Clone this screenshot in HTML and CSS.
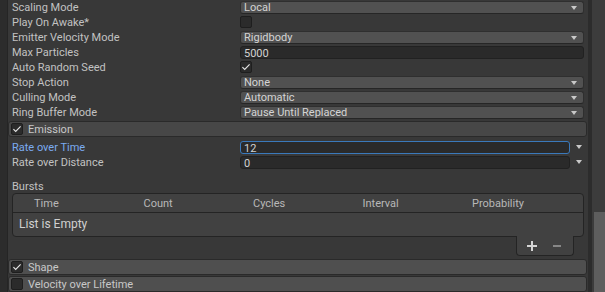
FILE: index.html
```html
<!DOCTYPE html>
<html>
<head>
<meta charset="utf-8">
<link rel="stylesheet" href="styles.css">
</head>
<body>
<div class="inspector">
  <div class="edge"></div>
  <div class="content">
    <div class="props">
      <div class="row"><span class="label">Scaling Mode</span><div class="dropdown"><span>Local</span><i class="tri"></i></div></div>
      <div class="row"><span class="label">Play On Awake*</span><span class="checkbox"></span></div>
      <div class="row"><span class="label">Emitter Velocity Mode</span><div class="dropdown"><span>Rigidbody</span><i class="tri"></i></div></div>
      <div class="row"><span class="label">Max Particles</span><div class="textfield">5000</div></div>
      <div class="row"><span class="label">Auto Random Seed</span><span class="checkbox"><svg viewBox="0 0 12 12" width="12" height="12"><path d="M2.4 6.2 L4.7 8.5 L9.6 3.3" fill="none" stroke="#e6e6e6" stroke-width="1.1"/></svg></span></div>
      <div class="row"><span class="label">Stop Action</span><div class="dropdown"><span>None</span><i class="tri"></i></div></div>
      <div class="row"><span class="label">Culling Mode</span><div class="dropdown"><span>Automatic</span><i class="tri"></i></div></div>
      <div class="row"><span class="label">Ring Buffer Mode</span><div class="dropdown"><span>Pause Until Replaced</span><i class="tri"></i></div></div>
    </div>

    <div class="module-header emission"><span class="checkbox"><svg viewBox="0 0 12 12" width="12" height="12"><path d="M2.4 6.2 L4.7 8.5 L9.6 3.3" fill="none" stroke="#e6e6e6" stroke-width="1.1"/></svg></span><span class="module-title">Emission</span></div>
    <div class="module-body">
      <div class="row"><span class="label focus">Rate over Time</span><div class="curve-field"><div class="textfield focused">12</div><i class="tri"></i></div></div>
      <div class="row"><span class="label">Rate over Distance</span><div class="curve-field"><div class="textfield">0</div><i class="tri"></i></div></div>
      <div class="section-label">Bursts</div>
      <div class="list">
        <div class="list-head"><span>Time</span><span>Count</span><span>Cycles</span><span>Interval</span><span>Probability</span></div>
        <div class="list-body">List is Empty</div>
      </div>
      <div class="list-footer-row"><div class="list-footer">
        <svg class="plus" viewBox="0 0 10 10" width="10" height="10"><path d="M0 5 H10 M5 0 V10" stroke="#d4d4d4" stroke-width="2"/></svg>
        <svg class="minus" viewBox="0 0 8 10" width="8" height="10"><path d="M0 5 H8" stroke="#878787" stroke-width="2"/></svg>
      </div></div>
    </div>
    <div class="modules">
      <div class="module-header"><span class="checkbox"><svg viewBox="0 0 12 12" width="12" height="12"><path d="M2.4 6.2 L4.7 8.5 L9.6 3.3" fill="none" stroke="#e6e6e6" stroke-width="1.1"/></svg></span><span class="module-title">Shape</span></div>
      <div class="module-header"><span class="checkbox"></span><span class="module-title">Velocity over Lifetime</span></div>
    </div>
  </div>
  <div class="scrollbar"><div class="thumb"></div></div>
</div>
</body>
</html>
```

FILE: styles.css
```css
* { box-sizing: border-box; }
html, body {
  margin: 0;
  padding: 0;
  background: #383838;
  width: 605px;
  height: 292px;
  overflow: hidden;
}
body {
  font-family: Roboto, "Noto Sans", sans-serif;
  font-size: 11px;
  color: #c2c2c2;
}
.inspector {
  display: flex;
  height: 292px;
}
.edge {
  width: 8px;
  flex: none;
  background: #2c2c2c;
  border-right: 1px solid #252525;
}
.content {
  width: 580px;
  flex: none;
  display: flex;
  flex-direction: column;
}
.props {
  display: flex;
  flex-direction: column;
  gap: 2px;
}
.row {
  display: grid;
  grid-template-columns: 228px 1fr;
  align-items: center;
  height: 13px;
  padding: 0 4px;
}
.label {
  white-space: nowrap;
  line-height: 13px;
  padding-top: 1px;
}
.label.focus { color: #7babf0; }
.dropdown {
  height: 13px;
  background: #515151;
  border: 1px solid #2f2f2f;
  border-bottom-color: #262626;
  border-radius: 3px;
  display: flex;
  align-items: center;
  justify-content: space-between;
  padding: 1px 6px 0 3px;
  color: #d4d4d4;
  line-height: 11px;
}
.tri {
  display: block;
  width: 0;
  height: 0;
  border-left: 3.5px solid transparent;
  border-right: 3.5px solid transparent;
  border-top: 4px solid #c8c8c8;
}
.textfield {
  height: 13px;
  background: #2a2a2a;
  border: 1px solid #212121;
  border-radius: 3px;
  padding: 1px 3px 0;
  line-height: 11px;
  color: #d2d2d2;
}
.textfield.focused {
  border-color: #3a79bb;
}
.checkbox {
  width: 12px;
  height: 12px;
  background: #2b2b2b;
  border: 1px solid #1e1e1e;
  border-radius: 2px;
  display: flex;
  align-items: center;
  justify-content: center;
}
.checkbox svg { display: block; flex: none; }
.module-header {
  height: 16px;
  margin-right: 1px;
  background: #4f4f4f;
  border: 1px solid #2a2a2a;
  border-radius: 3px;
  display: flex;
  align-items: center;
  padding-left: 2px;
  gap: 5px;
  color: #c8c8c8;
}
.module-header.emission { margin-top: 3px; background: #474747; }
.module-title { line-height: 14px; padding-top: 1px; }
.module-body {
  display: flex;
  flex-direction: column;
  padding-top: 3px;
}
.module-body > .row + .row { margin-top: 2px; }
.curve-field {
  display: grid;
  grid-template-columns: 1fr 14px;
  align-items: center;
}
.curve-field .tri { justify-self: end; margin-right: 2px; }
.section-label {
  padding-left: 4px;
  margin-top: 11px;
  height: 13px;
  line-height: 13px;
  padding-top: 1px;
}
.list {
  margin: 1px 4px 0 4px;
  border: 1px solid #242424;
  border-radius: 4px;
  background: #414141;
  height: 44px;
}
.list-head {
  height: 19px;
  border-bottom: 1px solid #242424;
  display: flex;
  align-items: center;
  padding-left: 21px;
  padding-top: 1px;
  color: #b8b8b8;
}
.list-head span { width: 109.5px; }
.list-body {
  padding-left: 6px;
  height: 23px;
  line-height: 23px;
  font-size: 12px;
  color: #d0d0d0;
}
.list-footer-row {
  display: flex;
  justify-content: flex-end;
  padding-right: 14px;
}
.list-footer {
  margin-top: -1px;
  width: 58px;
  height: 20px;
  background: #414141;
  border: 1px solid #242424;
  border-top: none;
  border-radius: 0 0 4px 4px;
  display: flex;
  align-items: center;
  padding-left: 10px;
  gap: 16px;
}
.list-footer svg { display: block; }
.modules {
  display: flex;
  flex-direction: column;
  gap: 1px;
  margin-top: 3px;
}
.scrollbar {
  flex: 1;
  border-left: 4px solid #2c2c2c;
  background: #3c3c3c;
  display: flex;
  flex-direction: column;
  justify-content: flex-end;
}
.thumb {
  height: 80px;
  background: #5e5e5e;
  margin-left: 2px;
}
```
